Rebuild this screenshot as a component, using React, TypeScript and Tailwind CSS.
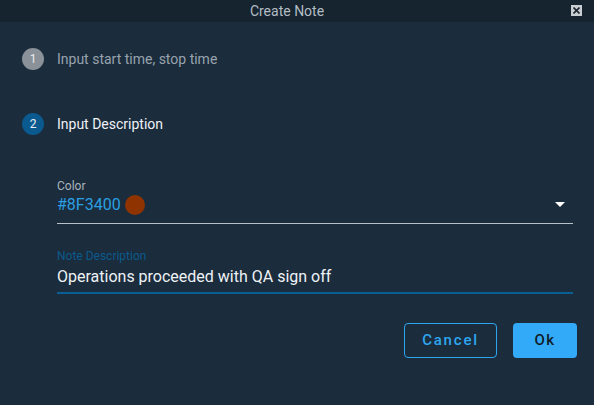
import React from "react";

export default function App() {
  return (
    <div
      className="w-[594px] h-[405px] bg-[#1b2c3d] flex flex-col overflow-hidden"
      style={{ fontFamily: "Roboto, 'Liberation Sans', sans-serif" }}
    >
      <div className="relative h-[22px] bg-[#15242f] flex items-center shrink-0">
        <div className="w-[574px] flex justify-center">
          <span className="text-[14px] text-[#b3bcc4] leading-none">Create Note</span>
        </div>
        <div className="absolute left-[571px] top-[5px] w-[11px] h-[11px] bg-[#c9ced3] flex items-center justify-center">
          <svg width="7" height="7" viewBox="0 0 7 7">
            <path d="M0.5 0.5 L6.5 6.5 M6.5 0.5 L0.5 6.5" stroke="#1b2530" strokeWidth="1.6" />
          </svg>
        </div>
      </div>

      <div className="flex items-center pl-[22px] mt-[26px] h-[22px]">
        <div className="w-[22px] h-[22px] rounded-full bg-[#8a9199] flex items-center justify-center text-[12px] text-[#e8ebee]">1</div>
        <span className="ml-[13px] text-[14px] text-[#98a3ad]">Input start time, stop time</span>
      </div>

      <div className="flex items-center pl-[22px] mt-[43px] h-[22px]">
        <div className="w-[22px] h-[22px] rounded-full bg-[#0a5a8f] flex items-center justify-center text-[12px] text-[#e8eef3]">2</div>
        <span className="ml-[13px] text-[14px] text-[#eef2f5]">Input Description</span>
      </div>

      <div className="ml-[57px] w-[516px] mt-[44px] flex flex-col">
        <span className="text-[12px] leading-[14px] text-[#a9b3bc]">Color</span>
        <div className="flex items-center h-[24px]">
          <span className="text-[16px] text-[#2a9fe2]">#8F3400</span>
          <div className="ml-[4px] w-[20px] h-[20px] rounded-full bg-[#8f3400]" />
          <div className="ml-auto mr-[8px]">
            <svg width="10" height="6" viewBox="0 0 10 6">
              <path d="M0 0 L10 0 L5 5 Z" fill="#ffffff" />
            </svg>
          </div>
        </div>
        <div className="h-[1px] bg-[#b6c1ca] mt-[6px]" />

        <span className="text-[12px] leading-[14px] text-[#0b5a8c] mt-[25px]">Note Description</span>
        <div className="flex items-center h-[24px] mt-[2px]">
          <span className="text-[16px] text-[#eef2f5]">Operations proceeded with QA sign off</span>
        </div>
        <div className="h-[2px] bg-[#0a5e96] mt-[3px]" />
      </div>

      <div className="flex justify-end pr-[17px] mt-[29px] gap-[16px]">
        <button className="w-[93px] h-[35px] rounded-[4px] border border-[#2ea6ef] text-[#2ea6ef] text-[15px] font-medium tracking-[0.12em]">
          Cancel
        </button>
        <button className="w-[64px] h-[35px] rounded-[4px] bg-[#33aaf7] text-[#0e1b26] text-[15px] font-medium tracking-[0.1em]">
          Ok
        </button>
      </div>
    </div>
  );
}
